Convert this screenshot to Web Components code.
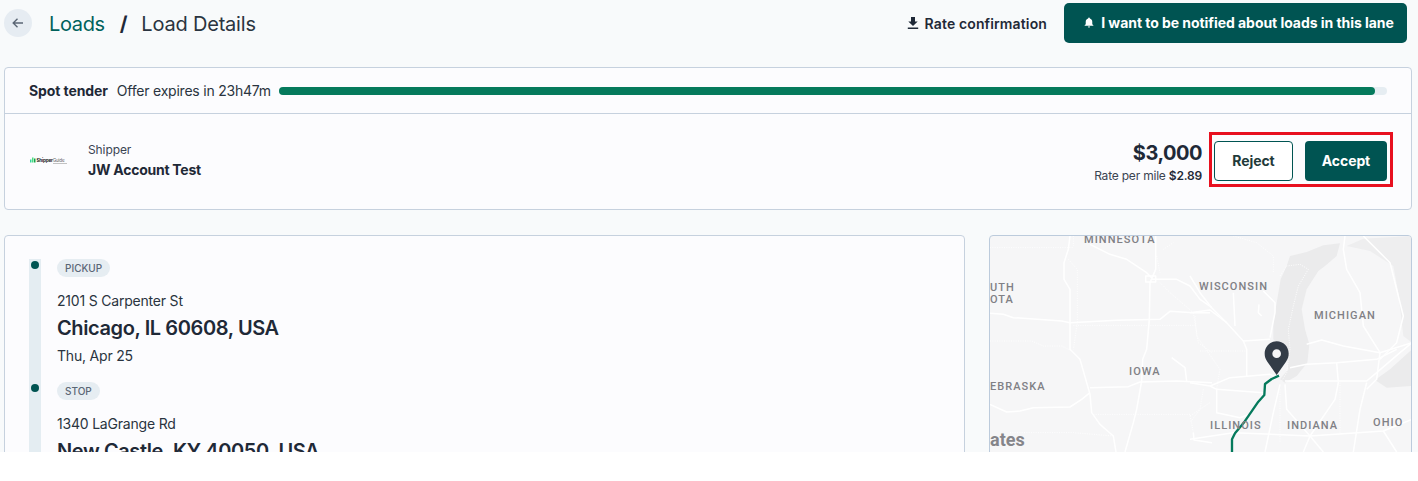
<!DOCTYPE html>
<html>
<head>
<meta charset="utf-8">
<title>Load Details</title>
<style>
    html, body { margin: 0; background: #fff; }
    body { font-family: Inter, "Open Sans", sans-serif; color: #1f2937; }
</style>
</head>
<body>
<load-page>
    <load-header></load-header>
    <tender-card></tender-card>
    <div slot="route"><route-card></route-card></div>
    <route-map slot="map"></route-map>
</load-page>
<script>
class LoadPage extends HTMLElement {
    constructor(){
        super();
        this.attachShadow({mode: "open"}).innerHTML = `
        <style>
            :host{
                display: block;
                height: 452px;
                overflow: hidden;
                background: #f8fafb;
                padding: 0 6px 0 4px;
            }
            .columns{
                display: grid;
                grid-template-columns: 961px 423px;
                justify-content: space-between;
                margin-top: 25px;
            }
        </style>
        <slot></slot>
        <div class="columns">
            <slot name="route"></slot>
            <slot name="map"></slot>
        </div>`;
    }
}

class LoadHeader extends HTMLElement {
    constructor(){
        super();
        this.attachShadow({mode: "open"}).innerHTML = `
        <style>
            :host{
                display: flex;
                align-items: center;
                height: 67px;
                padding: 0 5px 21px 0;
                box-sizing: border-box;
            }
            .back{
                width: 28px;
                height: 28px;
                border-radius: 50%;
                background: #e6ecf2;
                display: flex;
                align-items: center;
                justify-content: center;
                margin-right: 17px;
            }
            .crumbs{
                display: flex;
                font-size: 20px;
                letter-spacing: -0.2px;
                color: #2a3440;
                padding-top: 2px;
            }
            .crumbs a{ color: #00615c; letter-spacing: -0.35px; }
            .crumbs b{ margin: 0 14px 0 15px; color: #1f2937; font-weight: 700; }
            .actions{
                margin-left: auto;
                display: flex;
                align-items: center;
            }
            .rate{
                display: flex;
                align-items: center;
                gap: 6px;
                font-size: 14px;
                font-weight: 600;
                letter-spacing: 0.13px;
                margin-right: 17px;
                color: #1f2937;
            }
            .notify{
                display: flex;
                align-items: center;
                justify-content: center;
                gap: 7px;
                width: 343px;
                height: 40px;
                box-sizing: border-box;
                padding-left: 7px;
                margin-top: -1px;
                background: #005452;
                color: #fff;
                border-radius: 5px;
                font-size: 14px;
                font-weight: 700;
                letter-spacing: -0.05px;
            }
        </style>
        <span class="back">
            <svg width="14" height="14" viewBox="0 0 14 14" fill="none" stroke="#5b6675" stroke-width="1.4"><path d="M12 7H2.500M6.500 2.800 2.200 7l4.300 4.200"/></svg>
        </span>
        <div class="crumbs"><a>Loads</a><b>/</b><span>Load Details</span></div>
        <div class="actions">
            <span class="rate">
                <svg width="12" height="14" viewBox="0 0 12 14" fill="#1f2937"><path d="M4 1h4v4.500h2.700L6 10 1.300 5.500H4zM.8 11.600h10.400V13H.8z"/></svg>
                Rate confirmation
            </span>
            <span class="notify">
                <svg width="10" height="11" viewBox="0 0 11 12" fill="#fff"><path d="M5.500.5c.5 0 .9.4.9.9v.3c1.700.4 2.700 1.800 2.700 3.500v2.600l1.200 1.300v.5H.7v-.5l1.200-1.300V5.200c0-1.700 1-3.100 2.700-3.500v-.3c0-.5.4-.9.9-.9zM4.300 10.500h2.400c0 .7-.5 1.100-1.200 1.100s-1.200-.4-1.200-1.100z"/></svg>
                I want to be notified about loads in this lane
            </span>
        </div>`;
    }
}

class TenderCard extends HTMLElement {
    constructor(){
        super();
        this.attachShadow({mode: "open"}).innerHTML = `
        <style>
            :host{
                display: block;
                height: 143px;
                box-sizing: border-box;
                background: #fcfcfe;
                border: 1px solid #c6d1de;
                border-radius: 4px;
            }
            .top{
                display: flex;
                align-items: center;
                height: 45px;
                padding: 0 24px;
                border-bottom: 1px solid #c6d1de;
                font-size: 14px;
                letter-spacing: -0.22px;
                color: #2a3440;
            }
            .top b{ font-weight: 700; margin-right: 9px; letter-spacing: -0.1px; color: #1f2937; }
            .bar{
                flex: 1;
                height: 8px;
                margin-left: 8px;
                border-radius: 4px;
                background: #e6edf2;
            }
            .bar i{
                display: block;
                width: 98.9%;
                height: 100%;
                border-radius: 4px;
                background: #057a5c;
            }
            .body{
                display: flex;
                align-items: center;
                height: 96px;
                padding: 0 18px 0 24px;
            }
            .logo{
                width: 39px;
                margin: 0 20px 4px 0;
                display: block;
            }
            .who{ margin-bottom: 4px; }
            .who small{ display: block; font-size: 12px; letter-spacing: -0.1px; color: #3a4452; margin-bottom: 4px; }
            .who strong{ display: block; font-size: 14px; font-weight: 700; letter-spacing: -0.25px; color: #1f2937; }
            .price{
                margin-left: auto;
                text-align: right;
                margin-right: 7px;
            }
            .price strong{ display: block; font-size: 20px; font-weight: 700; line-height: 24px; letter-spacing: -0.5px; color: #1f2937; }
            .price small{ display: block; font-size: 12px; letter-spacing: -0.2px; color: #3a4452; line-height: 16px; margin-top: 3px;}
            .price small b{ font-weight: 600; color: #1f2937; }
            .mark{
                display: flex;
                gap: 12px;
                box-sizing: border-box;
                padding: 6px 3px 0 2px;
                border: 3px solid #e8101f;
                height: 55px;
                margin-top: -6px;
            }
            button{
                font: inherit;
                font-size: 14px;
                font-weight: 700;
                letter-spacing: -0.1px;
                height: 40px;
                border-radius: 4px;
                cursor: pointer;
            }
            .reject{ width: 79px; background: #fff; border: 1px solid #005452; color: #1f3a3a; }
            .accept{ width: 82px; background: #005452; border: 0; color: #fff; }
        </style>
        <div class="top">
            <b>Spot tender</b>Offer expires in 23h47m
            <div class="bar"><i></i></div>
        </div>
        <div class="body">
            <svg class="logo" height="9" viewBox="0 0 39 9">
                <rect x="1" y="3.500" width="1.500" height="3" fill="#34d399"/>
                <rect x="3" y="1.500" width="1.500" height="5" fill="#4ade80"/>
                <rect x="5" y="2.500" width="1.500" height="4" fill="#16a34a"/>
                <text x="7.500" y="5.600" font-family="Inter, sans-serif" font-size="4.600" font-weight="700" letter-spacing="-0.2" fill="#222">Shipper<tspan font-weight="400" fill="#666">Guide</tspan></text>
                <rect x="24" y="7" width="14" height=".7" fill="#aaa"/>
            </svg>
            <div class="who"><small>Shipper</small><strong>JW Account Test</strong></div>
            <div class="price">
                <strong>$3,000</strong>
                <small>Rate per mile <b>$2.89</b></small>
            </div>
            <div class="mark">
                <button class="reject">Reject</button>
                <button class="accept">Accept</button>
            </div>
        </div>`;
    }
}

class StopItem extends HTMLElement {
    constructor(){
        super();
        this.attachShadow({mode: "open"}).innerHTML = `
        <style>
            :host{
                display: block;
                position: relative;
                height: 123px;
                padding-left: 28px;
            }
            .dot{
                position: absolute;
                left: 2px;
                top: 2px;
                width: 8px;
                height: 8px;
                border-radius: 50%;
                background: #005452;
            }
            .pill{
                display: block;
                width: fit-content;
                height: 18px;
                line-height: 19px;
                padding: 0 8px;
                border-radius: 9px;
                background: #e6edf2;
                color: #5a6675;
                font-size: 10px;
                font-weight: 500;
            }
            .street{ font-size: 14px; letter-spacing: -0.2px; line-height: 18px; margin-top: 15px; color: #2a3440; }
            .city{ font-size: 20px; font-weight: 600; letter-spacing: -0.4px; line-height: 24px; margin-top: 6px; color: #1f2937; }
            .date{ font-size: 14px; letter-spacing: -0.2px; line-height: 18px; margin-top: 7px; color: #2a3440; }
        </style>
        <span class="dot"></span>
        <span class="pill"><slot name="kind"></slot></span>
        <div class="street"><slot name="street"></slot></div>
        <div class="city"><slot name="city"></slot></div>
        <div class="date"><slot name="date"></slot></div>`;
    }
}

class RouteCard extends HTMLElement {
    constructor(){
        super();
        this.attachShadow({mode: "open"}).innerHTML = `
        <style>
            :host{
                display: block;
                height: 240px;
                box-sizing: border-box;
                background: #fcfcfe;
                border: 1px solid #c6d1de;
                border-radius: 4px;
                padding: 23px 24px 0;
            }
            .line{
                background: linear-gradient(#e4edf2, #e4edf2) 0 0 / 12px 100% no-repeat;
            }
        </style>
        <div class="line">
            <stop-item>
                <span slot="kind">PICKUP</span>
                <span slot="street">2101 S Carpenter St</span>
                <span slot="city">Chicago, IL 60608, USA</span>
                <span slot="date">Thu, Apr 25</span>
            </stop-item>
            <stop-item>
                <span slot="kind">STOP</span>
                <span slot="street">1340 LaGrange Rd</span>
                <span slot="city">New Castle, KY 40050, USA</span>
            </stop-item>
        </div>`;
    }
}

class RouteMap extends HTMLElement {
    constructor(){
        super();
        const labels = [
            ["MINNESOTA", 1084, 239],
            ["UTH", 990, 287],
            ["OTA", 990, 299],
            ["WISCONSIN", 1199, 286],
            ["MICHIGAN", 1314, 315],
            ["IOWA", 1129, 371],
            ["EBRASKA", 990, 386],
            ["ILLINOIS", 1210, 425],
            ["INDIANA", 1287, 425],
            ["OHIO", 1373, 422]
        ];
        let spans = ``;
        labels.forEach((el) => {
            spans += `<span style="left:${el[1] - 990}px;top:${el[2] - 238}px">${el[0]}</span>`;
        });
        this.attachShadow({mode: "open"}).innerHTML = `
        <style>
            :host{
                display: block;
                position: relative;
                height: 240px;
                box-sizing: border-box;
                background: #f6f6f7;
                border: 1px solid #bccbdc;
                border-radius: 4px;
                overflow: hidden;
            }
            svg{ position: absolute; left: 0; top: 0; display: block; }
            span{
                position: absolute;
                font-family: Roboto, sans-serif;
                font-size: 11px;
                font-weight: 500;
                letter-spacing: 1.05px;
                line-height: 6px;
                color: #808085;
                white-space: nowrap;
            }
            span.big{ font-size: 18px; font-weight: 700; letter-spacing: 0; line-height: 20px; color: #85858a; }
        </style>
        <svg width="421" height="238" viewBox="0 0 1263 714" fill="none">
            <g fill="#ebebec" transform="translate(600)">
                <path d="M250 310 250 260 260 200 272 130 290 90 300 60 350 48 400 28 450 22 440 60 405 90 385 105 350 160 335 220 345 280 358 325 352 380 320 420 285 440 270 430 295 400 290 350z"/>
                <path fill="#eeeeef" d="M470 30 520 8 666 0V320L640 300 625 170 610 90 540 45z"/>
                <path d="M555 432 600 400 666 340V450L590 455z"/>
            </g>
            <g stroke="#fff" stroke-width="4.500" stroke-linejoin="round">
                <path d="M0 232 40 235 70 245 215 255 240 260 380 253 510 250 540 226 610 230 660 230"/>
                <path d="M240 0 235 40 222 80 222 130 240 160 240 340 270 370 290 440 300 475 305 530 330 565 370 600 378 648"/>
                <path d="M300 25 360 55 410 70 470 110 485 125"/>
                <path d="M497 0V100L480 140 478 250 470 340 458 370 455 435 440 520 430 560 405 648"/>
                <path d="M485 130 560 130 600 150 630 190 666 215"/>
                <path d="M300 455 415 452 450 438 560 435 666 440"/>
                <path d="M0 505 50 528 90 525 130 515 240 513 275 490 300 470"/>
                <path d="M545 365 585 395 590 435"/>
                <path d="M467 120H497V138H467z"/>
                <path d="M610 590 612 612 666 620"/>
            </g>
            <g stroke="#fff" stroke-width="2.500" stroke-dasharray="3 4">
                <path d="M0 35H250M250 0V30M235 70 262 100V260L250 340"/>
                <path d="M250 268H620M610 230 625 320 666 350"/>
                <path d="M0 315H125L160 330H215L245 345"/>
                <path d="M510 140 540 170 610 230M500 60 510 110M520 40 550 20"/>
                <path d="M310 535H600L610 590M60 590H250L370 600"/>
                <path d="M640 460 630 520 600 560"/>
            </g>
            <g transform="translate(600)">
                <g stroke="#fff" stroke-width="4.500" stroke-linejoin="round">
                    <path d="M0 230 60 222 110 260 160 315 170 340 170 420"/>
                    <path d="M0 120 30 170 65 215 110 260"/>
                    <path d="M130 170 135 270"/>
                    <path d="M220 165 255 200 255 230 240 305"/>
                    <path d="M207 205 205 230 215 240"/>
                    <path d="M160 315 240 310"/>
                    <path d="M0 440 60 450 120 425 240 415 262 425"/>
                    <path d="M60 450 80 460 220 470"/>
                    <path d="M285 435H530L560 410 630 350 666 320"/>
                    <path d="M350 325 395 312 460 330 570 350 666 320"/>
                    <path d="M300 395 350 385 440 380 560 370 620 340"/>
                    <path d="M465 0 460 40 470 100 510 170 520 270 570 350 560 430 530 460"/>
                    <path d="M520 0 600 80 640 240 620 320 570 370"/>
                    <path d="M285 445 290 520 360 600 400 648"/>
                    <path d="M270 445 250 530 225 648"/>
                    <path d="M80 460V530L150 545 180 535"/>
                    <path d="M0 610 130 590 360 600 580 585 666 550"/>
                    <path d="M440 380 445 440 435 490 360 600 340 648"/>
                    <path d="M530 440 510 520 490 648"/>
                    <path d="M580 585 620 648"/>
                </g>
                <g stroke="#fff" stroke-width="2.500" stroke-dasharray="3 4">
                    <path d="M270 120 290 90 330 85 355 100 325 150 310 210 295 280 300 340 290 410 275 435"/>
                    <path d="M130 0 200 20 250 60 250 110"/>
                    <path d="M15 240 20 300 90 400 80 460M30 345H170"/>
                    <path d="M450 440V590M0 540 60 500"/>
                    <path d="M270 460V620"/>
                </g>
            </g>
            <g transform="translate(-30 -18)">
                <path d="M756 684V628L765 610 790 580 835 515 853 495 855 462 875 447 897 437" stroke="#057a5c" stroke-width="7" stroke-linejoin="round"/>
                <path fill="#333c47" fill-rule="evenodd" d="M890 435 862 395C857 387 854 380 854 371 854 350 870 334 890 334S926 350 926 371C926 380 923 387 918 395zM890 358A13 13 0 1 0 890 384 13 13 0 1 0 890 358z"/>
            </g>
        </svg>
        ${spans}
        <span class="big" style="left:0;top:194px">ates</span>`;
    }
}

customElements.define("load-page", LoadPage);
customElements.define("load-header", LoadHeader);
customElements.define("tender-card", TenderCard);
customElements.define("stop-item", StopItem);
customElements.define("route-card", RouteCard);
customElements.define("route-map", RouteMap);
</script>
</body>
</html>
